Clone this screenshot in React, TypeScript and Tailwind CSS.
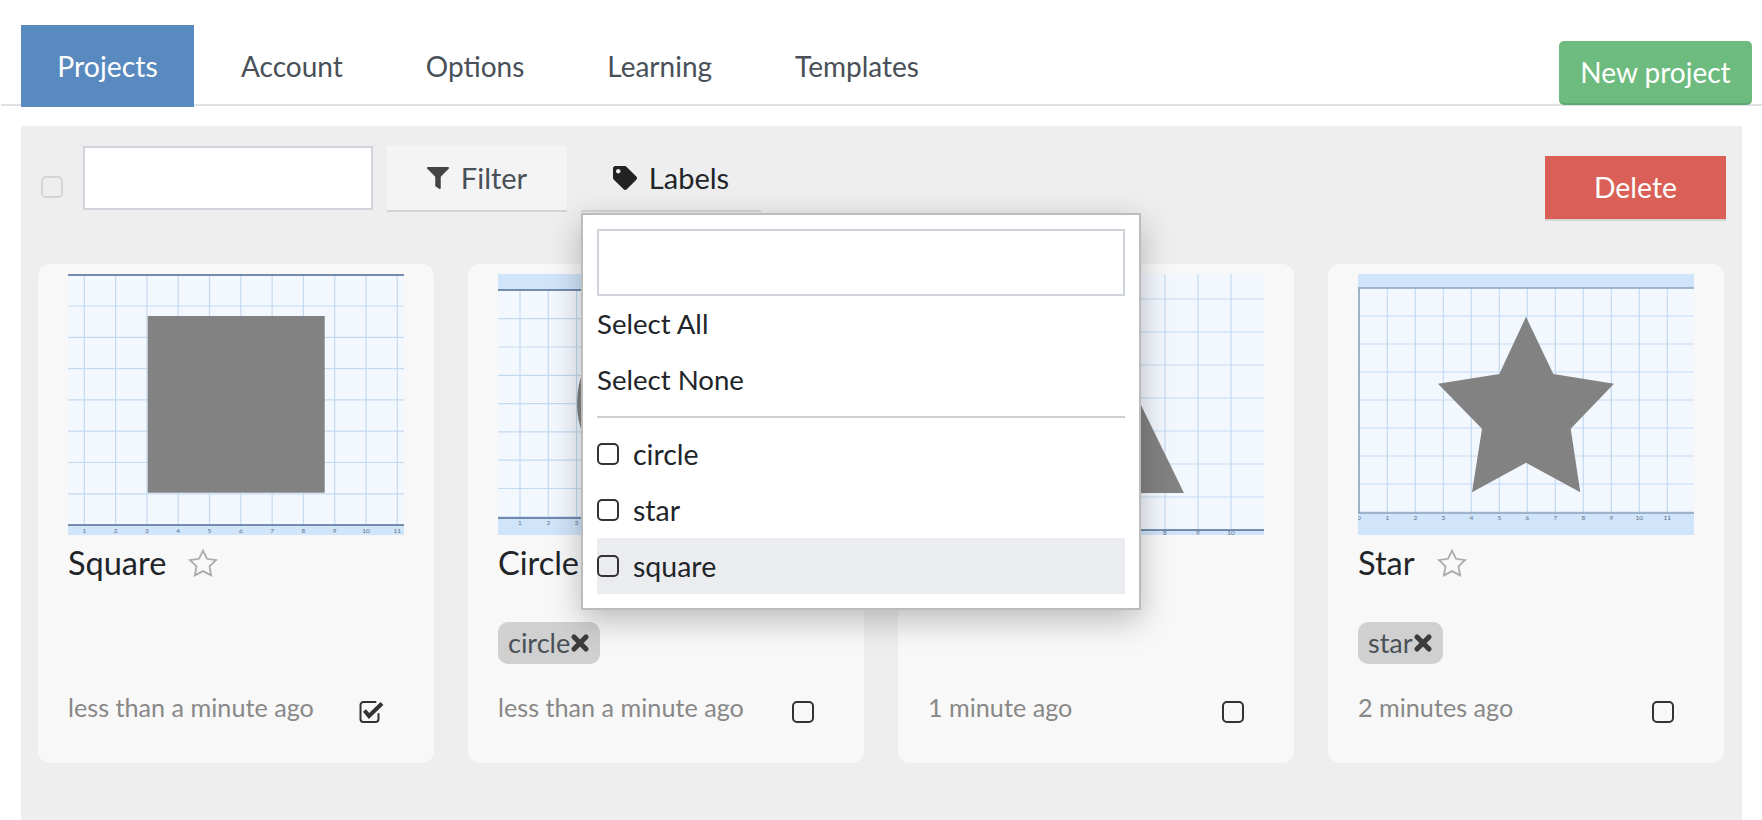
import { FaFilter, FaTag } from 'react-icons/fa';

type Shape =
  | { kind: 'rect'; x: number; y: number; w: number; h: number }
  | { kind: 'circle'; cx: number; cy: number; r: number }
  | { kind: 'poly'; points: string };

interface ThumbProps {
  x0: number;
  xStep: number;
  y0: number;
  yStep: number;
  topAxis: number | null;
  bottomAxis: number;
  leftAxis?: number;
  labelY: number;
  zeroLabel?: boolean;
  axisColor: string;
  shape: Shape;
}

const W = 336;
const H = 261;

function range(start: number, step: number, end: number) {
  const out: number[] = [];
  for (let v = start; v < end; v += step) out.push(v);
  return out;
}

function Thumbnail({ x0, xStep, y0, yStep, topAxis, bottomAxis, leftAxis, labelY, zeroLabel, axisColor, shape }: ThumbProps) {
  const top = topAxis ?? 0;
  return (
    <svg viewBox={`0 0 ${W} ${H}`} className="block h-[261px] w-[336px] shrink-0">
      <rect width={W} height={H} fill="#d0e4fa" />
      <rect x="0" y={top} width={W} height={bottomAxis - top} fill="#f3f8fe" />
      {range(x0, xStep, W).map((x) => (
        <line key={`v${x}`} x1={x} x2={x} y1={top} y2={bottomAxis} stroke="#c4daf1" strokeWidth="1.2" />
      ))}
      {range(y0, yStep, bottomAxis).map((y) => (
        <line key={`h${y}`} x1={0} x2={W} y1={y} y2={y} stroke="#c4daf1" strokeWidth="1.2" />
      ))}
      {shape.kind === 'rect' && <rect x={shape.x} y={shape.y} width={shape.w} height={shape.h} fill="#828282" />}
      {shape.kind === 'circle' && <circle cx={shape.cx} cy={shape.cy} r={shape.r} fill="#828282" />}
      {shape.kind === 'poly' && <polygon points={shape.points} fill="#828282" />}
      {topAxis !== null && <line x1={0} x2={W} y1={topAxis} y2={topAxis} stroke={axisColor} strokeWidth="1.6" />}
      <line x1={0} x2={W} y1={bottomAxis} y2={bottomAxis} stroke={axisColor} strokeWidth="1.6" />
      {leftAxis !== undefined && <line x1={leftAxis} x2={leftAxis} y1={top} y2={bottomAxis} stroke={axisColor} strokeWidth="1.6" />}
      {range(x0, xStep, W).map((x, i) => (
        <text key={`t${x}`} x={x} y={labelY} fontSize="6.5" textAnchor="middle" fill="#5f7389" fontFamily="Lato, sans-serif">
          {i + 1}
        </text>
      ))}
      {zeroLabel && (
        <text x={1} y={labelY} fontSize="6.5" textAnchor="middle" fill="#5f7389" fontFamily="Lato, sans-serif">
          0
        </text>
      )}
    </svg>
  );
}

function StarOutline() {
  return (
    <svg viewBox="0 0 30 28" className="h-[28px] w-[30px]" fill="none" stroke="#ababab" strokeWidth="1.8" strokeLinejoin="miter">
      <polygon points="15,1.6 19,9.8 28,11.1 21.5,17.4 23.1,26.4 15,22.1 6.9,26.4 8.5,17.4 2,11.1 11,9.8" />
    </svg>
  );
}

function TimesIcon() {
  return (
    <svg viewBox="0 0 20 20" className="h-[20px] w-[20px] shrink-0" fill="none" stroke="#3c3c3c" strokeWidth="5.2" strokeLinecap="round">
      <path d="M4 4 16 16M16 4 4 16" />
    </svg>
  );
}

function CheckBoxIcon({ checked, muted }: { checked?: boolean; muted?: boolean }) {
  if (checked) {
    return (
      <svg viewBox="0 0 25 22" className="h-[22px] w-[25px]" fill="none">
        <path d="M19.5 13v5a3 3 0 0 1-3 3h-12a3 3 0 0 1-3-3V4a3 3 0 0 1 3-3h12" stroke="#333" strokeWidth="2" strokeLinecap="round" />
        <path d="M5.5 9.5 10 15 23 2.5" stroke="#333" strokeWidth="4" />
      </svg>
    );
  }
  return (
    <div className={`h-[22px] w-[22px] rounded-[5px] border-2 ${muted ? 'border-[#d4d4d4]' : 'border-[#333]'}`} />
  );
}

interface CardInfo {
  title: string;
  tag?: string;
  time: string;
  checked?: boolean;
  thumb: ThumbProps;
}

const cards: CardInfo[] = [
  {
    title: 'Square',
    time: 'less than a minute ago',
    checked: true,
    thumb: {
      x0: 16.3,
      xStep: 31.3,
      y0: 32,
      yStep: 31.3,
      topAxis: 1,
      bottomAxis: 251,
      labelY: 259,
      axisColor: '#4f6d94',
      shape: { kind: 'rect', x: 79.7, y: 42, w: 177, h: 176.7 },
    },
  },
  {
    title: 'Circle',
    tag: 'circle',
    time: 'less than a minute ago',
    thumb: {
      x0: 22,
      xStep: 28.3,
      y0: 44.7,
      yStep: 28.3,
      topAxis: 16,
      bottomAxis: 244,
      labelY: 251,
      axisColor: '#4f6d94',
      shape: { kind: 'circle', cx: 167, cy: 129, r: 88 },
    },
  },
  {
    title: 'Triangle',
    time: '1 minute ago',
    thumb: {
      x0: 6,
      xStep: 33,
      y0: 25,
      yStep: 33,
      topAxis: null,
      bottomAxis: 256,
      labelY: 261,
      axisColor: '#4f6d94',
      shape: { kind: 'poly', points: '168,39 256,219 80,219' },
    },
  },
  {
    title: 'Star',
    tag: 'star',
    time: '2 minutes ago',
    thumb: {
      x0: 29.3,
      xStep: 28,
      y0: 42,
      yStep: 28,
      topAxis: 14,
      bottomAxis: 239,
      leftAxis: 1,
      labelY: 246,
      zeroLabel: true,
      axisColor: '#8ba2ba',
      shape: {
        kind: 'poly',
        points: '168,42.7 195.3,100 256,109.7 212.7,154.7 222.3,218.3 168,188.7 114,218.3 124,154.7 80,109.7 141.3,100',
      },
    },
  },
];

function ProjectCard({ card }: { card: CardInfo }) {
  return (
    <div className="flex h-[499px] flex-col rounded-xl bg-[#f8f8f8] px-[30px] pt-[10px]">
      <Thumbnail {...card.thumb} />
      <div className="mt-[8px] flex h-[40px] items-center gap-[22px]">
        <span className="text-[32.5px] leading-[40px] text-[#212529]">{card.title}</span>
        <StarOutline />
      </div>
      <div className="mt-[39px] h-[42px]">
        {card.tag && (
          <span className="inline-flex h-[42px] items-center rounded-[10px] bg-[#d0d0d0] px-[10px] text-[27px] text-[#495057]">
            {card.tag}
            <TimesIcon />
          </span>
        )}
      </div>
      <div className="mt-[29px] flex items-start justify-between pr-[20px]">
        <span className="text-[25.2px] leading-[28px] text-[#888]">{card.time}</span>
        <div className="mt-[8px]">
          <CheckBoxIcon checked={card.checked} />
        </div>
      </div>
    </div>
  );
}

function LabelsMenu() {
  return (
    <div className="absolute left-0 top-[67px] z-10 h-[397px] w-[560px] border-2 border-[#bcbcbc] bg-white px-[14px] pt-[14px] shadow-[0_10px_30px_rgba(0,0,0,0.25)]">
      <div className="h-[67px] border-2 border-[#ced4da] bg-white" />
      <div className="flex h-[56px] items-center text-[27.6px] text-[#212529]">Select All</div>
      <div className="flex h-[56px] items-center text-[27.6px] text-[#212529]">Select None</div>
      <div className="mb-[8px] mt-[8px] h-[2px] bg-[#d0d0d0]" />
      {['circle', 'star', 'square'].map((name) => (
        <div
          key={name}
          className={`flex h-[56px] items-center gap-[14px] text-[28.5px] text-[#212529] ${name === 'square' ? 'bg-[#ebecef]' : ''}`}
        >
          <CheckBoxIcon />
          <span>{name}</span>
        </div>
      ))}
    </div>
  );
}

export default function App() {
  return (
    <div className="h-[820px] overflow-hidden bg-white pt-[25px] font-['Lato',sans-serif]">
      <div className="ml-[1px] flex h-[81px] items-start justify-between border-b-2 border-[#dee2e6] pl-[20px] pr-[10px]">
        <div className="flex gap-[11px]">
          <a className="flex h-[82px] w-[173px] items-center justify-center bg-[#5889bf] text-[28.4px] text-white">Projects</a>
          {['Account', 'Options', 'Learning', 'Templates'].map((tab) => (
            <a key={tab} className="flex h-[82px] items-center px-[36px] text-[28px] text-[#495057]">
              {tab}
            </a>
          ))}
        </div>
        <button className="mt-[16px] h-[64px] w-[193px] rounded-[5px] border-b-2 border-[#62a873] bg-[#6dbb7f] text-[28px] text-white">
          New project
        </button>
      </div>

      <div className="ml-[21px] mr-[20px] mt-[20px] h-[694px] bg-[#eeeeee] pt-[20px]">
        <div className="flex items-start pl-[20px] pr-[16px]">
          <div className="mr-[20px] mt-[30px]">
            <CheckBoxIcon muted />
          </div>
          <div className="h-[64px] w-[290px] border-2 border-[#ced4da] bg-white" />
          <button className="ml-[14px] flex h-[66px] w-[180px] items-center justify-center gap-[12px] border-b-2 border-[#d5d5d5] bg-[#f4f4f4] text-[29px] text-[#495057]">
            <FaFilter className="h-[22px] w-[22px] text-[#444]" />
            Filter
          </button>
          <div className="relative ml-[14px]">
            <button className="flex h-[66px] w-[180px] items-center justify-center gap-[12px] border-b-2 border-[#d5d5d5] bg-[#eeeeee] text-[29px] text-[#212529]">
              <FaTag className="h-[24px] w-[24px] text-[#222]" />
              Labels
            </button>
            <LabelsMenu />
          </div>
          <button className="ml-auto mt-[10px] h-[65px] w-[181px] border-b-2 border-[#d5d5d5] bg-[#d95f57] text-[28.4px] text-white">
            Delete
          </button>
        </div>

        <div className="mt-[43px] grid grid-cols-4 gap-[34px] pl-[17px] pr-[18px]">
          {cards.map((card) => (
            <ProjectCard key={card.title} card={card} />
          ))}
        </div>
      </div>
    </div>
  );
}
